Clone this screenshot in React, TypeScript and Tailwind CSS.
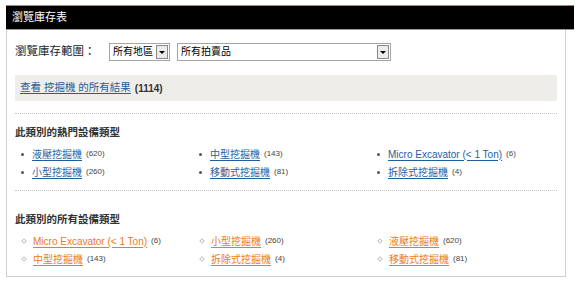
const hot = [
  { name: "液壓挖掘機", count: 620 },
  { name: "中型挖掘機", count: 143 },
  { name: "Micro Excavator (< 1 Ton)", count: 6 },
  { name: "小型挖掘機", count: 260 },
  { name: "移動式挖掘機", count: 81 },
  { name: "拆除式挖掘機", count: 4 },
];

const all = [
  { name: "Micro Excavator (< 1 Ton)", count: 6 },
  { name: "小型挖掘機", count: 260 },
  { name: "液壓挖掘機", count: 620 },
  { name: "中型挖掘機", count: 143 },
  { name: "拆除式挖掘機", count: 4 },
  { name: "移動式挖掘機", count: 81 },
];

function FakeSelect({ label, width }: { label: string; width: string }) {
  return (
    <div className={`flex h-[18px] items-center border border-[#a5a5a5] bg-white ${width}`}>
      <span className="flex-1 whitespace-nowrap pl-[3px] text-[10px] leading-none text-black">{label}</span>
      <span className="mr-px flex h-[14px] w-[12px] shrink-0 items-center justify-center border border-[#8a8a8a] bg-[#ececec]">
        <span className="h-0 w-0 border-x-[3px] border-t-[3px] border-x-transparent border-t-black" />
      </span>
    </div>
  );
}

function TypeList({ items, variant }: { items: { name: string; count: number }[]; variant: "hot" | "all" }) {
  const link = variant === "hot" ? "text-[#1f5f9f]" : "text-[#ec7a22]";
  return (
    <ul className="grid w-[534px] grid-cols-3">
      {items.map((it) => (
        <li key={it.name + variant} className="flex h-[18px] items-center whitespace-nowrap">
          {variant === "hot" ? (
            <span className="ml-[6px] mr-[8px] h-[3px] w-[3px] rounded-full bg-[#555]" />
          ) : (
            <span className="ml-[7px] mr-[7px] h-[4px] w-[4px] rotate-45 border border-[#c4c4c4]" />
          )}
          <a href="#" className={`text-[10px] underline underline-offset-2 ${link}`}>
            {it.name}
          </a>
          <span className="ml-[4px] text-[8px] text-[#444]">({it.count})</span>
        </li>
      ))}
    </ul>
  );
}

export default function App() {
  return (
    <div
      className="min-h-[295px] w-[575px] bg-white pt-[5px]"
      style={{ fontFamily: '"Liberation Sans", "Noto Sans CJK TC", sans-serif' }}
    >
      <div className="ml-[6px] w-[568px]">
        <div className="flex h-[25px] items-center border-t border-b border-t-[#e2781e] border-b-[#9a9a9a] bg-black pl-[6px] text-[11px] text-white">
          瀏覽庫存表
        </div>
      </div>

      <div className="ml-[6px] w-[560px] border-x border-b border-[#cfcfcf] px-[8px] pb-[8px] pt-[13px]">
        <div className="flex items-center">
          <span className="w-[94px] text-[11.5px] text-[#222]">瀏覽庫存範圍：</span>
          <FakeSelect label="所有地區" width="w-[61px]" />
          <div className="w-[7px]" />
          <FakeSelect label="所有拍賣品" width="w-[214px]" />
        </div>

        <div className="mt-[14px] flex h-[26px] items-center bg-[#eeede9] pl-[5px]">
          <a href="#" className="text-[10.5px] text-[#1f5f9f] underline underline-offset-2">
            查看 挖掘機 的所有結果
          </a>
          <span className="ml-[4px] text-[10px] font-bold text-[#333]">(1114)</span>
        </div>

        <div className="mt-[12px] border-t border-dotted border-[#c8c8c8]" />

        <h3 className="mt-[11px] text-[10.5px] font-bold leading-[14px] text-[#333]">此類別的熱門設備類型</h3>
        <div className="mt-[6px]">
          <TypeList items={hot} variant="hot" />
        </div>

        <div className="mt-[9px] border-t border-dotted border-[#c8c8c8]" />

        <h3 className="mt-[21px] text-[10.5px] font-bold leading-[14px] text-[#333]">此類別的所有設備類型</h3>
        <div className="mt-[6px]">
          <TypeList items={all} variant="all" />
        </div>
      </div>

      <div className="mt-[18px] border-t border-[#e2e2e2]" />
    </div>
  );
}
